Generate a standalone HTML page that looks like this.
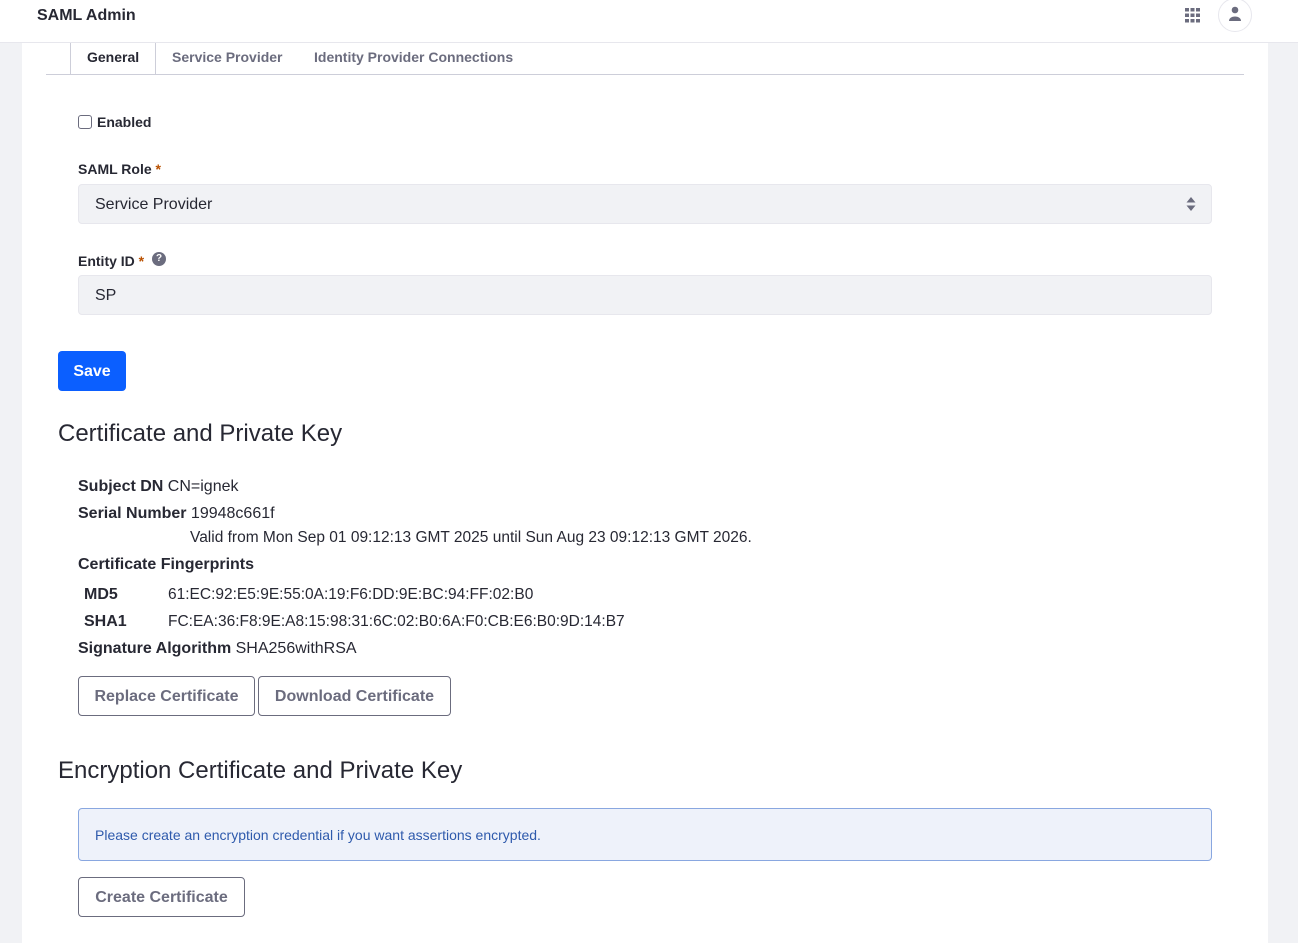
<!DOCTYPE html>
<html><head><meta charset="utf-8"><style>
*{box-sizing:border-box;margin:0;padding:0}
body{width:1298px;height:930px;overflow:hidden;background:#f1f2f5;font-family:"Liberation Sans",sans-serif;color:#272833;position:relative}
.hdr{position:absolute;left:0;top:0;width:1298px;height:43px;background:#fff;border-bottom:1px solid #e7e7ed}
.card{position:absolute;left:22px;top:43px;width:1246px;height:900px;background:#fff}
.a{position:absolute;white-space:nowrap}
.b{font-weight:bold}
.inp{position:absolute;left:78px;width:1134px;height:40px;background:#f1f2f5;border:1px solid #e7e7ed;border-radius:4px;font-size:16px;color:#272833;padding:11px 16px}
.btn{position:absolute;height:40px;border:1px solid #6b6c7e;border-radius:4px;color:#6b6c7e;font-weight:bold;font-size:16px;text-align:center;line-height:40px;background:#fff}
h2{position:absolute;font-weight:normal;font-size:24px;color:#272833;white-space:nowrap}
.t{font-size:16px}
.m{font-size:15.5px}
</style></head><body>
<div class="hdr">
<div class="a b" style="left:37px;top:7px;font-size:16px">SAML Admin</div>
<svg class="a" style="left:1185px;top:8px" width="15" height="15" viewBox="0 0 15 15" fill="#6b6c7e"><rect x="0" y="0" width="4" height="3.5"/><rect x="5.5" y="0" width="4" height="3.5"/><rect x="11" y="0" width="4" height="3.5"/><rect x="0" y="5.5" width="4" height="3.5"/><rect x="5.5" y="5.5" width="4" height="3.5"/><rect x="11" y="5.5" width="4" height="3.5"/><rect x="0" y="11" width="4" height="3.5"/><rect x="5.5" y="11" width="4" height="3.5"/><rect x="11" y="11" width="4" height="3.5"/></svg>
<div class="a" style="left:1218px;top:-2px;width:34px;height:34px;border:1px solid #e7e7ed;border-radius:50%"></div>
<svg class="a" style="left:1228px;top:6px" width="14" height="16" viewBox="0 0 14 16" fill="#6b6c7e"><circle cx="7" cy="4" r="3.3"/><path d="M1 15 C1 9 13 9 13 15 Z"/></svg>
</div>
<div class="card">
<div class="a" style="left:24px;top:31px;width:1198px;height:1px;background:#cdced9"></div>
<div class="a" style="left:48px;top:0;width:86px;height:31px;border-left:1px solid #cdced9;border-right:1px solid #cdced9;background:#fff"></div>
<div class="a b" style="left:65px;top:6px;font-size:14px">General</div>
<div class="a b" style="left:150px;top:6px;font-size:14px;color:#6b6c7e">Service Provider</div>
<div class="a b" style="left:292px;top:6px;font-size:14px;color:#6b6c7e">Identity Provider Connections</div>
</div>
<div class="a" style="left:78px;top:115px;width:14px;height:14px;border:1px solid #6b6c7e;border-radius:3px;background:#fff"></div>
<div class="a b" style="left:97px;top:114px;font-size:14px">Enabled</div>
<div class="a b" style="left:78px;top:161px;font-size:14px">SAML Role <span style="color:#b95000">*</span></div>
<div class="inp" style="top:184px">Service Provider</div>
<svg class="a" style="left:1186px;top:196px" width="10" height="16" viewBox="0 0 10 16" fill="#6b6c7e"><path d="M5 1 L9.5 6.5 H0.5Z M5 15 L9.5 9.5 H0.5Z"/></svg>
<div class="a b" style="left:78px;top:253px;font-size:14px">Entity ID <span style="color:#b95000">*</span></div>
<div class="a" style="left:152px;top:252px;width:14px;height:14px;border-radius:50%;background:#6b6c7e;color:#fff;font-size:10px;font-weight:bold;text-align:center;line-height:14px">?</div>
<div class="inp" style="top:275px">SP</div>
<div class="a b" style="left:58px;top:351px;width:68px;height:40px;background:#0b5fff;border-radius:4px;color:#fff;font-size:16px;text-align:center;line-height:41px">Save</div>
<h2 style="left:58px;top:420px">Certificate and Private Key</h2>
<div class="a t" style="left:78px;top:478px"><b>Subject DN</b> CN=ignek</div>
<div class="a t" style="left:78px;top:505px"><b>Serial Number</b> 19948c661f</div>
<div class="a m" style="left:190px;top:529px">Valid from Mon Sep 01 09:12:13 GMT 2025 until Sun Aug 23 09:12:13 GMT 2026.</div>
<div class="a t b" style="left:78px;top:556px">Certificate Fingerprints</div>
<div class="a t b" style="left:84px;top:586px">MD5</div>
<div class="a m" style="left:168px;top:586px">61:EC:92:E5:9E:55:0A:19:F6:DD:9E:BC:94:FF:02:B0</div>
<div class="a t b" style="left:84px;top:613px">SHA1</div>
<div class="a m" style="left:168px;top:613px">FC:EA:36:F8:9E:A8:15:98:31:6C:02:B0:6A:F0:CB:E6:B0:9D:14:B7</div>
<div class="a t" style="left:78px;top:640px"><b>Signature Algorithm</b> SHA256withRSA</div>
<div class="btn" style="left:78px;top:676px;width:177px">Replace Certificate</div>
<div class="btn" style="left:258px;top:676px;width:193px">Download Certificate</div>
<h2 style="left:58px;top:757px">Encryption Certificate and Private Key</h2>
<div class="a" style="left:78px;top:808px;width:1134px;height:53px;background:#eef2fa;border:1px solid #89a7e0;border-radius:4px;color:#2e5aac;font-size:14px;padding:18px 16px">Please create an encryption credential if you want assertions encrypted.</div>
<div class="btn" style="left:78px;top:877px;width:167px">Create Certificate</div>
</body></html>
